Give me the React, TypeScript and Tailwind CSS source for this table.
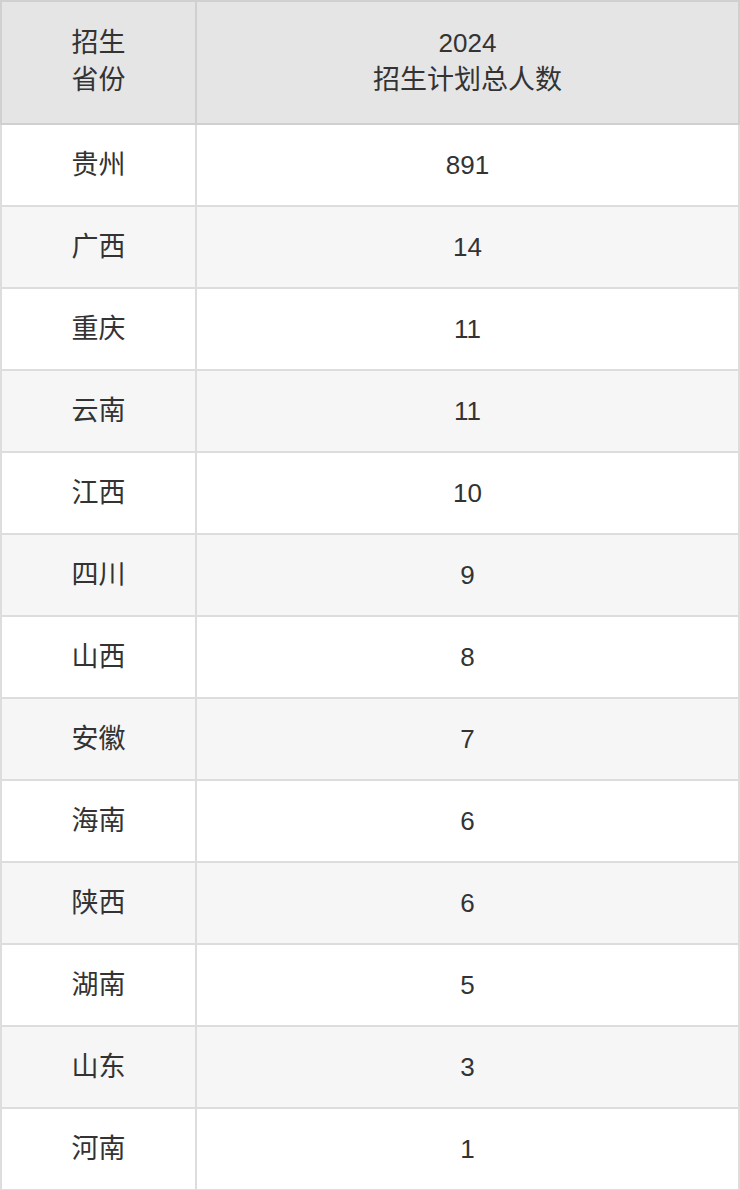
const rows: [string, string][] = [
  ["贵州", "891"],
  ["广西", "14"],
  ["重庆", "11"],
  ["云南", "11"],
  ["江西", "10"],
  ["四川", "9"],
  ["山西", "8"],
  ["安徽", "7"],
  ["海南", "6"],
  ["陕西", "6"],
  ["湖南", "5"],
  ["山东", "3"],
  ["河南", "1"],
];

export default function App() {
  return (
    <div className="w-[740px] bg-white font-['Liberation_Sans','Noto_Sans_CJK_SC',sans-serif] text-[26px] leading-[36px] text-[#333]">
      <table className="w-[740px] table-fixed border-collapse border-2 border-[#d4d4d4] text-center">
        <colgroup>
          <col className="w-[195px]" />
          <col />
        </colgroup>
        <thead>
          <tr className="h-[123px] bg-[#e5e5e5]">
            <th className="border-2 border-[#d0d0d0] pb-px font-normal leading-[37px] text-[27px]">
              招生
              <br />
              省份
            </th>
            <th className="border-2 border-[#d0d0d0] pb-px font-normal leading-[37px] text-[27px]">
              <span className="text-[26px]">2024</span>
              <br />
              招生计划总人数
            </th>
          </tr>
        </thead>
        <tbody>
          {rows.map(([prov, n], i) => (
            <tr key={prov} className={`h-[82px] ${i % 2 === 1 ? "bg-[#f6f6f6]" : "bg-white"}`}>
              <td className="border-2 border-[#dddddd] pb-px text-[27px]">{prov}</td>
              <td className="border-2 border-[#dddddd] pb-px">{n}</td>
            </tr>
          ))}
        </tbody>
      </table>
    </div>
  );
}
